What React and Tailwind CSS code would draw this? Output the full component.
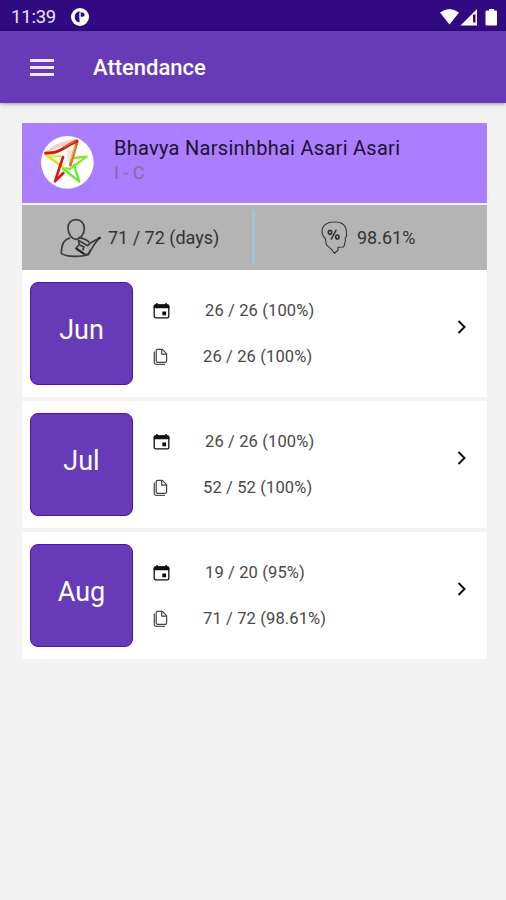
import React from 'react';

const months = [
    { name: 'Jun', days: '26 / 26 (100%)', total: '26 / 26 (100%)' },
    { name: 'Jul', days: '26 / 26 (100%)', total: '52 / 52 (100%)' },
    { name: 'Aug', days: '19 / 20 (95%)', total: '71 / 72 (98.61%)' }
];

const SchoolLogo = () => (
    <svg viewBox="11 9 159 159" className="w-[53px] h-[53px] shrink-0" fill="none" strokeLinecap="round" strokeLinejoin="round">
        <circle cx="90" cy="88" r="79" fill="#fff" />
        <path d="M30 52 Q62 24 118 18 L112 26 Q70 42 32 56Z" fill="#f3cfc9" />
        <path d="M88 55 L112 44 L100 82 L90 94Z" fill="#fae3cd" />
        <path d="M26 65 L78 104" stroke="#d3e81f" strokeWidth="8" />
        <path d="M38 70 L68 69" stroke="#e8e62c" strokeWidth="6" />
        <path d="M108 75 L148 71 L98 108 L86 106" stroke="#86ea1e" strokeWidth="7" />
        <path d="M110 96 L126 146 L78 108" stroke="#62ec32" strokeWidth="7" />
        <path d="M119 28 L99 96" stroke="#cf7a30" strokeWidth="9" />
        <path d="M113 40 L99 84" stroke="#efb56a" strokeWidth="3" />
        <path d="M25 60 Q52 62 74 49 Q96 34 119 24" stroke="#d8180f" strokeWidth="9" />
        <path d="M80 42 Q98 32 114 25" stroke="#d5682c" strokeWidth="4" />
        <path d="M77 72 L53 145 L78 120" stroke="#dc1a12" strokeWidth="8" />
    </svg>
);

const PersonCheckIcon = () => (
    <svg viewBox="135 69 126 120" className="w-[42px] h-10 shrink-0" fill="none" stroke="#3c3c3c" strokeWidth="5" strokeLinejoin="round">
        <path d="M183 74 C168 74 158 85 159 101 C160 118 170 132 183 133 C197 132 207 118 208 101 C208 85 198 74 183 74Z" />
        <path d="M166 128 C148 134 140 143 139 175 C155 187 195 186 217 180 C222 175 225 169 226 164" />
        <path d="M190 127 C203 129 215 134 223 142" />
        <path d="M190 134 L193 148 L183 160 L207 177 L220 179 C230 160 242 140 255 128 L226 144 L218 152 L190 136" />
        <path d="M194 150 L207 156 L203 166" />
        <path d="M183 160 L208 177" stroke="#222" strokeWidth="6" />
        <circle cx="253" cy="129" r="4" fill="#222" stroke="none" />
    </svg>
);

const HeadPercentIcon = () => (
    <svg viewBox="210 75 84 105" className="w-7 h-[35px] shrink-0" fill="none" stroke="#333" strokeWidth="3.2" strokeLinejoin="round">
        <path d="M229 149 L226 131 C217 122 213 108 218 98 C225 86 238 81 252 81 C270 80 283 87 287 99 C291 107 288 115 290 123 L286 128 L286 137 L283 151 L280 156 L264 157 L264 165 L254 175 L245 164 L229 149Z" />
        <ellipse cx="240" cy="112" rx="5" ry="6" strokeWidth="5" />
        <ellipse cx="262" cy="126" rx="5" ry="6" strokeWidth="5" />
        <path d="M259 104 L243 134" strokeWidth="4.500" />
    </svg>
);

const CalendarIcon = () => (
    <svg viewBox="0 0 17 16" className="w-[17px] h-4 shrink-0">
        <rect x="1.2" y="2.2" width="14.6" height="12.6" rx="1.6" fill="none" stroke="#111" strokeWidth="1.3" />
        <path d="M.6 5.2V3Q.6 1.3 2.3 1.3H3V.3h1.9v1h7.2v-1H14v1h.7q1.7 0 1.7 1.700v2.200Z" fill="#111" />
        <rect x="9.3" y="8.5" width="3.8" height="3.8" fill="#111" />
    </svg>
);

const PagesIcon = () => (
    <svg viewBox="0 0 16 18" className="w-4 h-[18px] shrink-0" fill="none" strokeLinejoin="round">
        <path d="M4.600 1.300H9.300L13.600 5.600V13Q13.600 14.300 12.300 14.300H4.600Q3.200 14.300 3.200 13V2.700Q3.200 1.300 4.600 1.300Z" stroke="#444" strokeWidth="1.200" />
        <path d="M8.700 1.600V6.100H13.300" stroke="#444" strokeWidth="1.200" />
        <path d="M1.300 3.600V14.600Q1.300 16.400 3.100 16.400H12" stroke="#555" strokeWidth="1.300" />
    </svg>
);

const StatusBar = () => (
    <div className="h-[31px] bg-[#310a82] flex items-center text-white">
        <span className="ml-[11px] w-[60px] mt-[3px] text-[18.5px] tracking-[-0.2px] leading-none text-[#e9e3f5]">11:39</span>
        <svg viewBox="0 0 18 18" className="w-[18px] h-[18px] mt-[2px]">
            <circle cx="9" cy="9" r="9" fill="#fff" />
            <path d="M8.500 3.300V14.600Q3.700 13.600 3.700 9Q3.700 4.300 8.500 3.300Z" fill="#310a82" />
            <path d="M8 4.500H11.500Q13.700 4.700 13.700 6.700Q13.700 8.800 11.500 8.800H8Z" fill="#310a82" />
            <rect x="8.300" y="4.800" width="1.400" height="5" fill="#fff" />
        </svg>
        <svg viewBox="0 0 60 18" className="w-[60px] h-[18px] ml-auto mr-[7px] mt-[2px]" fill="#fff">
            <path d="M1 4.5Q10.500-2.500 20 4.500L10.500 16.500Z" />
            <path d="M38 1V17.500H21.500Z" />
            <path d="M34 6.500H36.500V14.500H34Z" fill="#310a82" />
            <path d="M48 2.500H50V1H55V2.500H57Q58 2.500 58 3.500V16.500Q58 17.500 57 17.500H48Q46.500 17.500 46.500 16.500V3.500Q46.500 2.500 48 2.500Z" />
        </svg>
    </div>
);

const MonthRow = ({ name, days, total }) => (
    <div className="h-[127px] bg-white flex items-start pt-3 pl-[8px] pr-5">
        <div className="w-[103px] h-[103px] shrink-0 rounded-lg bg-[#673ab7] border border-[#5210ad] flex items-center justify-center text-white text-[27px] leading-none pb-[6px]">
            {name}
        </div>
        <div className="ml-5 flex-1 pt-[18px] text-[16.5px] tracking-[0.13px] leading-[22px] text-[#484848]">
            <div className="flex items-center h-[22px]">
                <CalendarIcon />
                <span className="ml-[35px]">{days}</span>
            </div>
            <div className="flex items-center h-[22px] mt-[24px]">
                <PagesIcon />
                <span className="ml-[34px]">{total}</span>
            </div>
        </div>
        <svg viewBox="0 0 10 14" className="w-[10px] h-[14px] mt-[38px]" fill="none" stroke="#111" strokeWidth="2">
            <path d="M1.500 1L7.500 7L1.500 13" />
        </svg>
    </div>
);

const App = () => {
    return (
        <div className="w-[506px] h-[900px] overflow-hidden bg-[#f3f3f3] font-[Roboto,sans-serif]">
            <StatusBar />
            <header className="h-[72px] bg-[#673ab7] flex items-center shadow-[0_1px_4px_rgba(0,0,0,0.35)]">
                <div className="ml-[30px] w-[24px] flex flex-col gap-[4px]">
                    <div className="h-[3px] bg-[#efe8f9]" />
                    <div className="h-[3px] bg-[#efe8f9]" />
                    <div className="h-[3px] bg-[#efe8f9]" />
                </div>
                <h1 className="ml-[39px] mt-px text-[22px] leading-none font-medium text-white">Attendance</h1>
            </header>

            <main className="mt-5 ml-[22px] w-[465px]">
                <div className="h-[80px] bg-[#ab7dff] flex items-start pt-[13px] pl-[19px]">
                    <SchoolLogo />
                    <div className="ml-5">
                        <div className="text-[20px] leading-[24px] tracking-[0.28px] text-[#1c1230]">Bhavya Narsinhbhai Asari Asari</div>
                        <div className="mt-px text-[18px] leading-[24px] text-[#80709c]">I - C</div>
                    </div>
                </div>

                <div className="mt-[2px] h-[65px] bg-[#b4b4b4] flex text-[18px] text-[#333]">
                    <div className="w-[230px] pl-[38px] flex items-center">
                        <PersonCheckIcon />
                        <span className="ml-[6px]">71 / 72 (days)</span>
                    </div>
                    <div className="w-[3px] h-[54px] mt-[5px] bg-[#a2c5d4]" />
                    <div className="pl-[65px] flex items-center">
                        <HeadPercentIcon />
                        <span className="ml-[9px]">98.61%</span>
                    </div>
                </div>

                <div className="flex flex-col gap-[4px]">
                    {months.map(month => (
                        <MonthRow key={month.name} {...month} />
                    ))}
                </div>
            </main>
        </div>
    );
};

export default App;
